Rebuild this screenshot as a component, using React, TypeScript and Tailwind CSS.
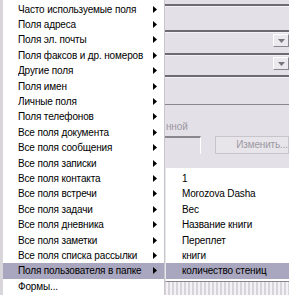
import React from "react";

const mainItems = [
  "Часто используемые поля",
  "Поля адреса",
  "Поля эл. почты",
  "Поля факсов и др. номеров",
  "Другие поля",
  "Поля имен",
  "Личные поля",
  "Поля телефонов",
  "Все поля документа",
  "Все поля сообщения",
  "Все поля записки",
  "Все поля контакта",
  "Все поля встречи",
  "Все поля задачи",
  "Все поля дневника",
  "Все поля заметки",
  "Все поля списка рассылки",
  "Поля пользователя в папке",
  "Формы...",
];

const subItems = ["1", "Morozova Dasha", "Вес", "Название книги", "Переплет", "книги", "количество стениц"];

function Arrow() {
  return (
    <svg width="4" height="7" viewBox="0 0 4 7" className="shrink-0">
      <path d="M0 0 L4 3.5 L0 7 Z" fill="#000" />
    </svg>
  );
}

function DropBtn() {
  return (
    <div className="w-[16px] h-[13px] bg-[#ece9ee] border-t border-l border-white border-r border-b border-r-[#8a8690] border-b-[#8a8690] flex items-center justify-center">
      <svg width="7" height="4" viewBox="0 0 7 4">
        <path d="M0 0 L7 0 L3.5 4 Z" fill="#7a7680" />
      </svg>
    </div>
  );
}

export default function App() {
  const font = { fontFamily: "'Liberation Sans', 'DejaVu Sans', sans-serif" };
  return (
    <div className="relative w-[289px] h-[295px] overflow-hidden bg-[#e4e0e7] text-[10px] tracking-[-0.15px] text-black" style={font}>
      {/* background dialog */}
      <div className="absolute left-[164px] top-0 w-[125px] h-[295px] flex flex-col bg-[#e4e0e7]">
        <div className="h-[4px]" />
        <div className="h-[2px] bg-[#6e6a74]" />
        <div className="h-[1px] bg-[#f4f2f6]" />
        <div className="h-[23px]" />
        <div className="h-[2px] bg-[#6e6a74]" />
        <div className="h-[1px] bg-[#f4f2f6]" />
        <div className="h-[20px] flex items-start justify-end pt-[1px]"><DropBtn /></div>
        <div className="h-[2px] bg-[#6e6a74]" />
        <div className="h-[1px] bg-[#f4f2f6]" />
        <div className="h-[19px] flex items-start justify-end pt-[1px]"><DropBtn /></div>
        <div className="h-[2px] bg-[#6e6a74]" />
        <div className="h-[1px] bg-[#f4f2f6]" />
        <div className="h-[26px]" />
        <div className="h-[1px] bg-[#8a8690]" />
        <div className="h-[15px]" />
        <div className="h-[14px] pl-[2px] text-[#9c98a2] leading-[14px]">нной</div>
        <div className="h-[2px]" />
        <div className="flex items-start gap-[14px] h-[22px]">
          <div className="w-[46px] h-[18px] border-t-2 border-t-[#8a8690] border-r border-r-white bg-[#e4e0e7]" />
          <div className="flex-1 h-[18px] border border-[#c8c4cc] bg-[#e8e5ea] pl-[20px] text-[#9c98a2] leading-[16px]">Изменить...</div>
        </div>
        <div className="h-[8px]" />
        <div className="flex-1" />
        <div className="h-[14px] mb-0 bg-[repeating-linear-gradient(90deg,#d8d4dc_0px,#d8d4dc_2px,#f4f2f6_2px,#f4f2f6_4px)]" />
      </div>

      {/* main menu */}
      <div className="absolute left-0 top-0 w-[165px] h-[295px] bg-white border-l-[3px] border-l-[#d8d6da] border-r border-r-[#c8c6cc] pt-[1.5px]">
        {mainItems.map((t, i) => {
          const hl = i === 17;
          return (
            <div
              key={t}
              className={`h-[15.4px] flex items-center pl-[15px] pr-[7px] ${hl ? "bg-[#a9a7bf]" : ""}`}
            >
              <span className="flex-1 whitespace-nowrap overflow-hidden leading-[13px]">{t}</span>
              {i < 18 && <Arrow />}
            </div>
          );
        })}
      </div>

      {/* submenu */}
      <div className="absolute left-[165px] top-[168px] w-[124px] h-[114px] bg-white border-l border-l-[#e8e6ea] border-b border-b-[#8a8690] pt-[2.9px]">
        {subItems.map((t, i) => (
          <div
            key={t}
            className={`h-[15.4px] flex items-center pl-[16px] ${i === 6 ? "bg-[#a9a7bf]" : ""}`}
          >
            <span className="whitespace-nowrap leading-[13px]">{t}</span>
          </div>
        ))}
      </div>
    </div>
  );
}
